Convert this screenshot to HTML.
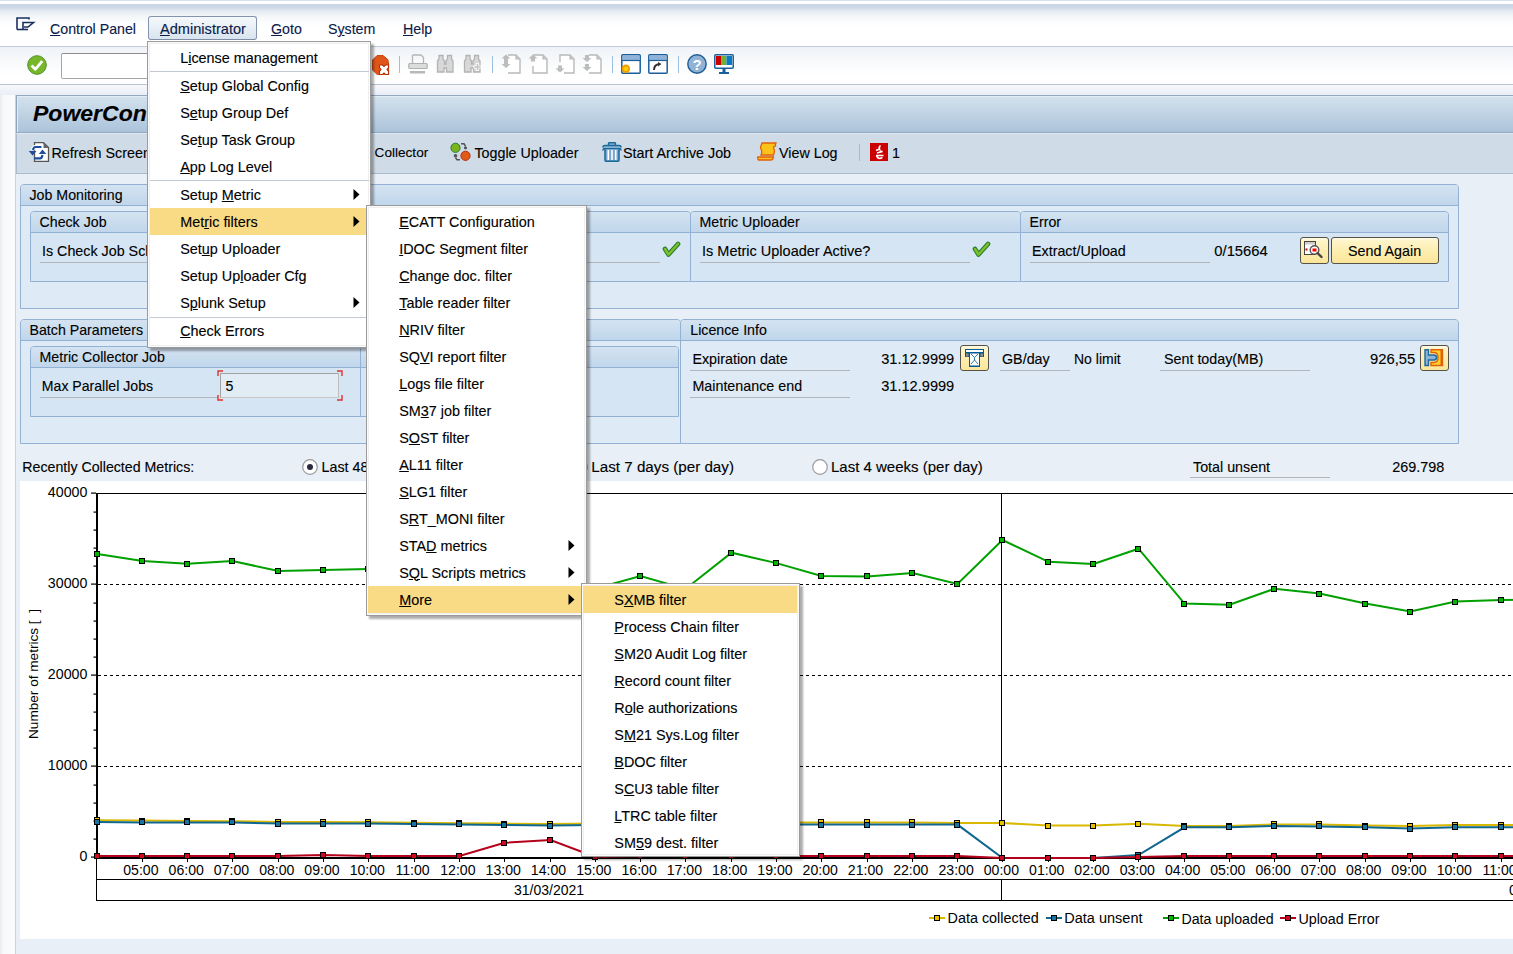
<!DOCTYPE html><html><head><meta charset="utf-8"><style>
*{margin:0;padding:0;box-sizing:border-box}
html,body{width:1513px;height:954px;overflow:hidden;background:#e8eff7;font-family:"Liberation Sans",sans-serif}
.a{position:absolute}
.t{position:absolute;white-space:nowrap;font-family:"Liberation Sans",sans-serif;-webkit-text-stroke:0.12px currentColor}
u{text-decoration:underline;text-underline-offset:1px;text-decoration-thickness:1px}
svg{position:absolute;overflow:visible}
</style></head><body><div class="a" style="left:0px;top:84px;width:16px;height:870px;background:linear-gradient(to right,#e9eaec,#f7f8f9 3px,#fbfcfd)"></div>
<div class="a" style="left:0px;top:0px;width:1513px;height:47px;background:linear-gradient(to bottom,#d6e1ee 0px,#d6e1ee 1px,#ffffff 1.5px,#ffffff 3.5px,#c8d5e5 4.5px,#cfdae7 8px,#e6ebf2 11px,#f3f6f9 16px,#fbfcfd 22px,#ffffff 28px,#ffffff 47px)"></div>
<div class="a" style="left:0px;top:46px;width:1513px;height:1px;background:#c3cdd9"></div>
<div class="a" style="left:0px;top:47px;width:1513px;height:38px;background:linear-gradient(to bottom,#eff3f8,#f7f9fb 35%,#ffffff 75%,#ffffff)"></div>
<div class="a" style="left:0px;top:84px;width:1513px;height:1px;background:#bac6d3"></div>
<div class="a" style="left:0px;top:85px;width:1513px;height:10px;background:linear-gradient(to bottom,#f6f8fb,#e9edf6)"></div>
<div class="a" style="left:15px;top:95px;width:1px;height:859px;background:#c5d2e0"></div>
<svg style="left:16px;top:17px" width="19" height="14" viewBox="0 0 19 14"><path d="M1 12.5 V1 H13 V2.5 M7 13 V5.5 H17.5 L12 10 H8" fill="none" stroke="#1b2f5e" stroke-width="1.6"/><path d="M1 12.5 H12" stroke="#1b2f5e" stroke-width="1.6"/></svg>
<div class="t " style="left:50.00px;top:22.28px;font-size:14.2px;line-height:14.2px;color:#0a1a4a;"><u>C</u>ontrol Panel</div>
<div class="a" style="left:148px;top:16px;width:109px;height:24px;border:1px solid #8594ad;border-bottom-color:#7f8ca3;border-radius:3px;background:linear-gradient(to bottom,#f6f9fc,#d8e4ef)"></div>
<div class="t " style="left:160.00px;top:21.94px;font-size:14.6px;line-height:14.6px;color:#0a1a4a;"><u>A</u>dministrator</div>
<div class="t " style="left:271.00px;top:22.28px;font-size:14.2px;line-height:14.2px;color:#0a1a4a;"><u>G</u>oto</div>
<div class="t " style="left:328.00px;top:22.28px;font-size:14.2px;line-height:14.2px;color:#0a1a4a;">S<u>y</u>stem</div>
<div class="t " style="left:403.00px;top:22.28px;font-size:14.2px;line-height:14.2px;color:#0a1a4a;"><u>H</u>elp</div>
<div class="a" style="left:16px;top:95px;width:1497px;height:38px;background:linear-gradient(to bottom,#d3e1ed,#c4d6e6 40%,#abc3da);border-top:1px solid #94a9c0;border-left:1px solid #8fa5bd;border-bottom:1px solid #93a9c0;box-shadow:inset 1px 1px 0 #e2ecf5"></div>
<div class="t " style="left:33.00px;top:101.53px;font-size:23px;line-height:23px;color:#000;transform:scaleY(0.97);transform-origin:0 19.47px;font-weight:bold;font-style:italic">PowerConnect</div>
<div class="a" style="left:16px;top:133px;width:1497px;height:41px;background:#cfdce7;border-top:1px solid #e3ebf2;border-left:1px solid #a9bbcc;border-bottom:1px solid #a9bbcc"></div>
<div class="t " style="left:51.50px;top:145.90px;font-size:14.3px;line-height:14.3px;color:#000;">Refresh Screen</div>
<div class="t " style="left:374.60px;top:146.49px;font-size:13.6px;line-height:13.6px;color:#000;">Collector</div>
<div class="t " style="left:474.40px;top:145.90px;font-size:14.3px;line-height:14.3px;color:#000;">Toggle Uploader</div>
<div class="t " style="left:623.00px;top:145.90px;font-size:14.3px;line-height:14.3px;color:#000;">Start Archive Job</div>
<div class="t " style="left:779.00px;top:145.90px;font-size:14.3px;line-height:14.3px;color:#000;">View Log</div>
<div class="a" style="left:859px;top:144px;width:1px;height:17px;background:#a9bccf"></div>
<div class="t " style="left:892.00px;top:145.90px;font-size:14.3px;line-height:14.3px;color:#000;">1</div>
<div class="a" style="left:20px;top:184px;width:1439px;height:125px;background:#deeaf5;border:1px solid #93b1d2;border-radius:4px 4px 0 0"></div>
<div class="a" style="left:21px;top:185px;width:1437px;height:21px;background:linear-gradient(to bottom,#d4e3f1,#c0d6eb);border-radius:3px 3px 0 0;border-bottom:1px solid #93b1d2"></div>
<div class="t " style="left:29.50px;top:188.48px;font-size:14.2px;line-height:14.2px;color:#000;">Job Monitoring</div>
<div class="a" style="left:30px;top:211px;width:661px;height:71px;background:#d5e5f3;border:1px solid #93b1d2;border-radius:4px 4px 0 0"></div>
<div class="a" style="left:31px;top:212px;width:659px;height:21px;background:linear-gradient(to bottom,#d4e3f1,#c0d6eb);border-radius:3px 3px 0 0;border-bottom:1px solid #93b1d2"></div>
<div class="t " style="left:39.50px;top:214.98px;font-size:14.2px;line-height:14.2px;color:#000;">Check Job</div>
<div class="a" style="left:690px;top:211px;width:331px;height:71px;background:#d5e5f3;border:1px solid #93b1d2;border-radius:4px 4px 0 0"></div>
<div class="a" style="left:691px;top:212px;width:329px;height:21px;background:linear-gradient(to bottom,#d4e3f1,#c0d6eb);border-radius:3px 3px 0 0;border-bottom:1px solid #93b1d2"></div>
<div class="t " style="left:699.50px;top:214.98px;font-size:14.2px;line-height:14.2px;color:#000;">Metric Uploader</div>
<div class="a" style="left:1020px;top:211px;width:429px;height:71px;background:#d5e5f3;border:1px solid #93b1d2;border-radius:4px 4px 0 0"></div>
<div class="a" style="left:1021px;top:212px;width:427px;height:21px;background:linear-gradient(to bottom,#d4e3f1,#c0d6eb);border-radius:3px 3px 0 0;border-bottom:1px solid #93b1d2"></div>
<div class="t " style="left:1029.50px;top:214.98px;font-size:14.2px;line-height:14.2px;color:#000;">Error</div>
<div class="t " style="left:42.00px;top:243.90px;font-size:14.3px;line-height:14.3px;color:#000;">Is Check Job Scheduled?</div>
<div class="a" style="left:40px;top:262px;width:620px;height:1px;background:#b2b6bb"></div>
<div class="t " style="left:702.00px;top:243.73px;font-size:14.5px;line-height:14.5px;color:#000;">Is Metric Uploader Active?</div>
<div class="a" style="left:700px;top:262px;width:270px;height:1px;background:#b2b6bb"></div>
<div class="t " style="left:1032.00px;top:243.90px;font-size:14.3px;line-height:14.3px;color:#000;">Extract/Upload</div>
<div class="a" style="left:1030px;top:262px;width:180px;height:1px;background:#b2b6bb"></div>
<div class="t " style="left:1214.30px;top:244.07px;font-size:14.8px;line-height:14.8px;color:#000;">0/15664</div>
<div class="a" style="left:1300px;top:237px;width:29px;height:27px;background:linear-gradient(to bottom,#fffbe8 0px,#fff4c8 3px,#fdeeb0 50%,#fbe59a);border:1px solid #55524a;border-radius:3px"></div>
<div class="a" style="left:1331px;top:237px;width:108px;height:27px;background:linear-gradient(to bottom,#fffbe8 0px,#fff4c8 3px,#fdeeb0 50%,#fbe59a);border:1px solid #55524a;border-radius:3px"></div>
<div class="t " style="left:1348.00px;top:244.10px;font-size:14.3px;line-height:14.3px;color:#000;">Send Again</div>
<div class="a" style="left:20px;top:319px;width:661px;height:125px;background:#deeaf5;border:1px solid #93b1d2;border-radius:4px 4px 0 0"></div>
<div class="a" style="left:21px;top:320px;width:659px;height:21px;background:linear-gradient(to bottom,#d4e3f1,#c0d6eb);border-radius:3px 3px 0 0;border-bottom:1px solid #93b1d2"></div>
<div class="t " style="left:29.50px;top:323.28px;font-size:14.2px;line-height:14.2px;color:#000;">Batch Parameters</div>
<div class="a" style="left:30px;top:346px;width:331px;height:71px;background:#d5e5f3;border:1px solid #93b1d2;border-radius:4px 4px 0 0"></div>
<div class="a" style="left:31px;top:347px;width:329px;height:21px;background:linear-gradient(to bottom,#d4e3f1,#c0d6eb);border-radius:3px 3px 0 0;border-bottom:1px solid #93b1d2"></div>
<div class="t " style="left:39.50px;top:350.18px;font-size:14.2px;line-height:14.2px;color:#000;">Metric Collector Job</div>
<div class="a" style="left:360px;top:346px;width:319px;height:71px;background:#d5e5f3;border:1px solid #93b1d2;border-radius:4px 4px 0 0"></div>
<div class="a" style="left:361px;top:347px;width:317px;height:21px;background:linear-gradient(to bottom,#d4e3f1,#c0d6eb);border-radius:3px 3px 0 0;border-bottom:1px solid #93b1d2"></div>
<div class="t " style="left:41.80px;top:378.76px;font-size:14.1px;line-height:14.1px;color:#000;">Max Parallel Jobs</div>
<div class="a" style="left:40px;top:397px;width:178px;height:1px;background:#b2b6bb"></div>
<div class="a" style="left:220px;top:373px;width:119px;height:25px;background:#e2ecf5;border:1px solid #a3a3a3;border-right-color:#bdbdbd;border-bottom-color:#c8c8c8"></div>
<div class="t " style="left:225.50px;top:378.68px;font-size:14.2px;line-height:14.2px;color:#000;">5</div>
<svg style="left:217px;top:370px" width="126" height="31" viewBox="0 0 126 31"><path d="M1 6V1H6 M120 1H125V6 M125 25V30H120 M6 30H1V25" fill="none" stroke="#e0322e" stroke-width="1.4"/></svg>
<div class="a" style="left:680px;top:319px;width:779px;height:125px;background:#deeaf5;border:1px solid #93b1d2;border-radius:4px 4px 0 0"></div>
<div class="a" style="left:681px;top:320px;width:777px;height:21px;background:linear-gradient(to bottom,#d4e3f1,#c0d6eb);border-radius:3px 3px 0 0;border-bottom:1px solid #93b1d2"></div>
<div class="t " style="left:690.30px;top:323.28px;font-size:14.2px;line-height:14.2px;color:#000;">Licence Info</div>
<div class="t " style="left:692.40px;top:351.50px;font-size:14.3px;line-height:14.3px;color:#000;">Expiration date</div>
<div class="a" style="left:690px;top:370px;width:160px;height:1px;background:#b2b6bb"></div>
<div class="t " style="left:692.40px;top:378.50px;font-size:14.3px;line-height:14.3px;color:#000;">Maintenance end</div>
<div class="a" style="left:690px;top:397px;width:160px;height:1px;background:#b2b6bb"></div>
<div class="t " style="left:881.20px;top:351.84px;font-size:14.6px;line-height:14.6px;color:#000;">31.12.9999</div>
<div class="t " style="left:881.20px;top:378.84px;font-size:14.6px;line-height:14.6px;color:#000;">31.12.9999</div>
<div class="a" style="left:960px;top:345px;width:29px;height:26px;background:linear-gradient(to bottom,#fffbe8 0px,#fff4c8 3px,#fdeeb0 50%,#fbe59a);border:1px solid #55524a;border-radius:3px"></div>
<div class="t " style="left:1002.00px;top:351.50px;font-size:14.3px;line-height:14.3px;color:#000;">GB/day</div>
<div class="a" style="left:1000px;top:370px;width:70px;height:1px;background:#b2b6bb"></div>
<div class="t " style="left:1074.00px;top:351.75px;font-size:14.0px;line-height:14.0px;color:#000;">No limit</div>
<div class="t " style="left:1164.00px;top:351.50px;font-size:14.3px;line-height:14.3px;color:#000;">Sent today(MB)</div>
<div class="a" style="left:1160px;top:370px;width:150px;height:1px;background:#b2b6bb"></div>
<div class="t " style="left:1370.00px;top:351.67px;font-size:14.8px;line-height:14.8px;color:#000;">926,55</div>
<div class="a" style="left:1420px;top:345px;width:29px;height:26px;background:linear-gradient(to bottom,#fffbe8 0px,#fff4c8 3px,#fdeeb0 50%,#fbe59a);border:1px solid #55524a;border-radius:3px"></div>
<div class="t " style="left:22.30px;top:459.78px;font-size:14.2px;line-height:14.2px;color:#000;">Recently Collected Metrics:</div>
<svg style="left:302px;top:459px" width="16" height="16" viewBox="0 0 16 16"><circle cx="8" cy="8" r="7.3" fill="#fff" stroke="#9a9a9a" stroke-width="1.2"/><circle cx="8" cy="8" r="3" fill="#2a2a3a"/></svg>
<div class="t " style="left:321.50px;top:459.70px;font-size:14.3px;line-height:14.3px;color:#000;">Last 48 hours (per hour)</div>
<svg style="left:572px;top:459px" width="16" height="16" viewBox="0 0 16 16"><circle cx="8" cy="8" r="7.3" fill="#fff" stroke="#9a9a9a" stroke-width="1.2"/></svg>
<div class="t " style="left:591.30px;top:458.93px;font-size:15.2px;line-height:15.2px;color:#000;">Last 7 days (per day)</div>
<svg style="left:812px;top:459px" width="16" height="16" viewBox="0 0 16 16"><circle cx="8" cy="8" r="7.3" fill="#fff" stroke="#9a9a9a" stroke-width="1.2"/></svg>
<div class="t " style="left:831.00px;top:459.10px;font-size:15.0px;line-height:15.0px;color:#000;">Last 4 weeks (per day)</div>
<div class="t " style="left:1193.00px;top:459.70px;font-size:14.3px;line-height:14.3px;color:#000;">Total unsent</div>
<div class="a" style="left:1190px;top:477px;width:140px;height:1px;background:#b2b6bb"></div>
<div class="t " style="left:1392.30px;top:459.61px;font-size:14.4px;line-height:14.4px;color:#000;">269.798</div>
<div class="a" style="left:20px;top:481px;width:1493px;height:458px;background:#fff"></div>
<svg style="left:0px;top:0px" width="1513" height="954" viewBox="0 0 1513 954"><rect x="97" y="493" width="1416" height="1" fill="#000"/><line x1="98" y1="766.4" x2="1513" y2="766.4" stroke="#000" stroke-width="1" stroke-dasharray="3 3" shape-rendering="crispEdges"/><line x1="98" y1="675.4" x2="1513" y2="675.4" stroke="#000" stroke-width="1" stroke-dasharray="3 3" shape-rendering="crispEdges"/><line x1="98" y1="584.4" x2="1513" y2="584.4" stroke="#000" stroke-width="1" stroke-dasharray="3 3" shape-rendering="crispEdges"/><rect x="1001" y="493" width="1" height="366" fill="#000"/><rect x="1001" y="879" width="1" height="22" fill="#000"/><rect x="96" y="857" width="1" height="44" fill="#000"/><rect x="96" y="879" width="1417" height="1" fill="#000"/><rect x="96" y="900" width="1417" height="1" fill="#000"/><rect x="96" y="493" width="2" height="366" fill="#000"/><rect x="91" y="856.5" width="5" height="1.2" fill="#000"/><rect x="93.5" y="838.5" width="2.5" height="1.2" fill="#000"/><rect x="93.5" y="820.5" width="2.5" height="1.2" fill="#000"/><rect x="93.5" y="802.5" width="2.5" height="1.2" fill="#000"/><rect x="93.5" y="784.5" width="2.5" height="1.2" fill="#000"/><rect x="91" y="765.5" width="5" height="1.2" fill="#000"/><rect x="93.5" y="747.5" width="2.5" height="1.2" fill="#000"/><rect x="93.5" y="729.5" width="2.5" height="1.2" fill="#000"/><rect x="93.5" y="711.5" width="2.5" height="1.2" fill="#000"/><rect x="93.5" y="693.5" width="2.5" height="1.2" fill="#000"/><rect x="91" y="674.5" width="5" height="1.2" fill="#000"/><rect x="93.5" y="656.5" width="2.5" height="1.2" fill="#000"/><rect x="93.5" y="638.5" width="2.5" height="1.2" fill="#000"/><rect x="93.5" y="620.5" width="2.5" height="1.2" fill="#000"/><rect x="93.5" y="602.5" width="2.5" height="1.2" fill="#000"/><rect x="91" y="583.5" width="5" height="1.2" fill="#000"/><rect x="93.5" y="565.5" width="2.5" height="1.2" fill="#000"/><rect x="93.5" y="547.5" width="2.5" height="1.2" fill="#000"/><rect x="93.5" y="529.5" width="2.5" height="1.2" fill="#000"/><rect x="93.5" y="511.5" width="2.5" height="1.2" fill="#000"/><rect x="91" y="492.5" width="5" height="1.2" fill="#000"/><rect x="142" y="859" width="1" height="3" fill="#000"/><rect x="187" y="859" width="1" height="3" fill="#000"/><rect x="232" y="859" width="1" height="3" fill="#000"/><rect x="278" y="859" width="1" height="3" fill="#000"/><rect x="323" y="859" width="1" height="3" fill="#000"/><rect x="368" y="859" width="1" height="3" fill="#000"/><rect x="414" y="859" width="1" height="3" fill="#000"/><rect x="459" y="859" width="1" height="3" fill="#000"/><rect x="504" y="859" width="1" height="3" fill="#000"/><rect x="550" y="859" width="1" height="3" fill="#000"/><rect x="595" y="859" width="1" height="3" fill="#000"/><rect x="640" y="859" width="1" height="3" fill="#000"/><rect x="685" y="859" width="1" height="3" fill="#000"/><rect x="731" y="859" width="1" height="3" fill="#000"/><rect x="776" y="859" width="1" height="3" fill="#000"/><rect x="821" y="859" width="1" height="3" fill="#000"/><rect x="867" y="859" width="1" height="3" fill="#000"/><rect x="912" y="859" width="1" height="3" fill="#000"/><rect x="957" y="859" width="1" height="3" fill="#000"/><rect x="1002" y="859" width="1" height="3" fill="#000"/><rect x="1048" y="859" width="1" height="3" fill="#000"/><rect x="1093" y="859" width="1" height="3" fill="#000"/><rect x="1138" y="859" width="1" height="3" fill="#000"/><rect x="1184" y="859" width="1" height="3" fill="#000"/><rect x="1229" y="859" width="1" height="3" fill="#000"/><rect x="1274" y="859" width="1" height="3" fill="#000"/><rect x="1319" y="859" width="1" height="3" fill="#000"/><rect x="1365" y="859" width="1" height="3" fill="#000"/><rect x="1410" y="859" width="1" height="3" fill="#000"/><rect x="1455" y="859" width="1" height="3" fill="#000"/><rect x="1501" y="859" width="1" height="3" fill="#000"/><rect x="1546" y="859" width="1" height="3" fill="#000"/><rect x="96" y="857" width="1417" height="2" fill="#000"/><polyline points="97.5,820.3 142.5,820.6 187.5,821.0 232.5,821.2 278.5,822.0 323.5,822.0 368.5,822.3 414.5,822.8 459.5,823.2 504.5,823.6 550.5,824.0 595.5,823.5 640.5,823.0 685.5,823.0 731.5,822.8 776.5,822.5 821.5,822.5 867.5,822.5 912.5,822.5 957.5,823.0 1002.5,823.0 1048.5,825.6 1093.5,825.6 1138.5,823.8 1184.5,826.0 1229.5,826.0 1274.5,824.5 1319.5,824.5 1365.5,825.5 1410.5,826.0 1455.5,825.0 1501.5,825.0 1546.5,825.0" fill="none" stroke="#d9b800" stroke-width="2" stroke-linejoin="miter"/><rect x="94.5" y="817.5" width="5" height="5" fill="#e8c000" stroke="#000" stroke-width="1" shape-rendering="crispEdges"/><rect x="139.5" y="818.5" width="5" height="5" fill="#e8c000" stroke="#000" stroke-width="1" shape-rendering="crispEdges"/><rect x="184.5" y="818.5" width="5" height="5" fill="#e8c000" stroke="#000" stroke-width="1" shape-rendering="crispEdges"/><rect x="229.5" y="818.5" width="5" height="5" fill="#e8c000" stroke="#000" stroke-width="1" shape-rendering="crispEdges"/><rect x="275.5" y="819.5" width="5" height="5" fill="#e8c000" stroke="#000" stroke-width="1" shape-rendering="crispEdges"/><rect x="320.5" y="819.5" width="5" height="5" fill="#e8c000" stroke="#000" stroke-width="1" shape-rendering="crispEdges"/><rect x="365.5" y="819.5" width="5" height="5" fill="#e8c000" stroke="#000" stroke-width="1" shape-rendering="crispEdges"/><rect x="411.5" y="820.5" width="5" height="5" fill="#e8c000" stroke="#000" stroke-width="1" shape-rendering="crispEdges"/><rect x="456.5" y="820.5" width="5" height="5" fill="#e8c000" stroke="#000" stroke-width="1" shape-rendering="crispEdges"/><rect x="501.5" y="821.5" width="5" height="5" fill="#e8c000" stroke="#000" stroke-width="1" shape-rendering="crispEdges"/><rect x="547.5" y="821.5" width="5" height="5" fill="#e8c000" stroke="#000" stroke-width="1" shape-rendering="crispEdges"/><rect x="592.5" y="821.5" width="5" height="5" fill="#e8c000" stroke="#000" stroke-width="1" shape-rendering="crispEdges"/><rect x="637.5" y="820.5" width="5" height="5" fill="#e8c000" stroke="#000" stroke-width="1" shape-rendering="crispEdges"/><rect x="682.5" y="820.5" width="5" height="5" fill="#e8c000" stroke="#000" stroke-width="1" shape-rendering="crispEdges"/><rect x="728.5" y="820.5" width="5" height="5" fill="#e8c000" stroke="#000" stroke-width="1" shape-rendering="crispEdges"/><rect x="773.5" y="819.5" width="5" height="5" fill="#e8c000" stroke="#000" stroke-width="1" shape-rendering="crispEdges"/><rect x="818.5" y="819.5" width="5" height="5" fill="#e8c000" stroke="#000" stroke-width="1" shape-rendering="crispEdges"/><rect x="864.5" y="819.5" width="5" height="5" fill="#e8c000" stroke="#000" stroke-width="1" shape-rendering="crispEdges"/><rect x="909.5" y="819.5" width="5" height="5" fill="#e8c000" stroke="#000" stroke-width="1" shape-rendering="crispEdges"/><rect x="954.5" y="820.5" width="5" height="5" fill="#e8c000" stroke="#000" stroke-width="1" shape-rendering="crispEdges"/><rect x="999.5" y="820.5" width="5" height="5" fill="#e8c000" stroke="#000" stroke-width="1" shape-rendering="crispEdges"/><rect x="1045.5" y="823.5" width="5" height="5" fill="#e8c000" stroke="#000" stroke-width="1" shape-rendering="crispEdges"/><rect x="1090.5" y="823.5" width="5" height="5" fill="#e8c000" stroke="#000" stroke-width="1" shape-rendering="crispEdges"/><rect x="1135.5" y="821.5" width="5" height="5" fill="#e8c000" stroke="#000" stroke-width="1" shape-rendering="crispEdges"/><rect x="1181.5" y="823.5" width="5" height="5" fill="#e8c000" stroke="#000" stroke-width="1" shape-rendering="crispEdges"/><rect x="1226.5" y="823.5" width="5" height="5" fill="#e8c000" stroke="#000" stroke-width="1" shape-rendering="crispEdges"/><rect x="1271.5" y="821.5" width="5" height="5" fill="#e8c000" stroke="#000" stroke-width="1" shape-rendering="crispEdges"/><rect x="1316.5" y="821.5" width="5" height="5" fill="#e8c000" stroke="#000" stroke-width="1" shape-rendering="crispEdges"/><rect x="1362.5" y="823.5" width="5" height="5" fill="#e8c000" stroke="#000" stroke-width="1" shape-rendering="crispEdges"/><rect x="1407.5" y="823.5" width="5" height="5" fill="#e8c000" stroke="#000" stroke-width="1" shape-rendering="crispEdges"/><rect x="1452.5" y="822.5" width="5" height="5" fill="#e8c000" stroke="#000" stroke-width="1" shape-rendering="crispEdges"/><rect x="1498.5" y="822.5" width="5" height="5" fill="#e8c000" stroke="#000" stroke-width="1" shape-rendering="crispEdges"/><rect x="1543.5" y="822.5" width="5" height="5" fill="#e8c000" stroke="#000" stroke-width="1" shape-rendering="crispEdges"/><polyline points="97.5,822.0 142.5,822.5 187.5,822.5 232.5,822.5 278.5,823.5 323.5,823.5 368.5,823.5 414.5,824.0 459.5,824.5 504.5,825.0 550.5,825.5 595.5,825.0 640.5,825.0 685.5,825.0 731.5,824.6 776.5,824.6 821.5,824.6 867.5,824.6 912.5,824.6 957.5,824.6 1002.5,858.0 1048.5,858.0 1093.5,858.0 1138.5,855.0 1184.5,827.3 1229.5,827.3 1274.5,826.0 1319.5,826.5 1365.5,827.3 1410.5,828.6 1455.5,827.3 1501.5,827.3 1546.5,827.3" fill="none" stroke="#0f6790" stroke-width="2" stroke-linejoin="miter"/><rect x="94.5" y="819.5" width="5" height="5" fill="#1a74a0" stroke="#000" stroke-width="1" shape-rendering="crispEdges"/><rect x="139.5" y="819.5" width="5" height="5" fill="#1a74a0" stroke="#000" stroke-width="1" shape-rendering="crispEdges"/><rect x="184.5" y="819.5" width="5" height="5" fill="#1a74a0" stroke="#000" stroke-width="1" shape-rendering="crispEdges"/><rect x="229.5" y="819.5" width="5" height="5" fill="#1a74a0" stroke="#000" stroke-width="1" shape-rendering="crispEdges"/><rect x="275.5" y="821.5" width="5" height="5" fill="#1a74a0" stroke="#000" stroke-width="1" shape-rendering="crispEdges"/><rect x="320.5" y="821.5" width="5" height="5" fill="#1a74a0" stroke="#000" stroke-width="1" shape-rendering="crispEdges"/><rect x="365.5" y="821.5" width="5" height="5" fill="#1a74a0" stroke="#000" stroke-width="1" shape-rendering="crispEdges"/><rect x="411.5" y="821.5" width="5" height="5" fill="#1a74a0" stroke="#000" stroke-width="1" shape-rendering="crispEdges"/><rect x="456.5" y="821.5" width="5" height="5" fill="#1a74a0" stroke="#000" stroke-width="1" shape-rendering="crispEdges"/><rect x="501.5" y="822.5" width="5" height="5" fill="#1a74a0" stroke="#000" stroke-width="1" shape-rendering="crispEdges"/><rect x="547.5" y="823.5" width="5" height="5" fill="#1a74a0" stroke="#000" stroke-width="1" shape-rendering="crispEdges"/><rect x="592.5" y="822.5" width="5" height="5" fill="#1a74a0" stroke="#000" stroke-width="1" shape-rendering="crispEdges"/><rect x="637.5" y="822.5" width="5" height="5" fill="#1a74a0" stroke="#000" stroke-width="1" shape-rendering="crispEdges"/><rect x="682.5" y="822.5" width="5" height="5" fill="#1a74a0" stroke="#000" stroke-width="1" shape-rendering="crispEdges"/><rect x="728.5" y="822.5" width="5" height="5" fill="#1a74a0" stroke="#000" stroke-width="1" shape-rendering="crispEdges"/><rect x="773.5" y="822.5" width="5" height="5" fill="#1a74a0" stroke="#000" stroke-width="1" shape-rendering="crispEdges"/><rect x="818.5" y="822.5" width="5" height="5" fill="#1a74a0" stroke="#000" stroke-width="1" shape-rendering="crispEdges"/><rect x="864.5" y="822.5" width="5" height="5" fill="#1a74a0" stroke="#000" stroke-width="1" shape-rendering="crispEdges"/><rect x="909.5" y="822.5" width="5" height="5" fill="#1a74a0" stroke="#000" stroke-width="1" shape-rendering="crispEdges"/><rect x="954.5" y="822.5" width="5" height="5" fill="#1a74a0" stroke="#000" stroke-width="1" shape-rendering="crispEdges"/><rect x="999.5" y="855.5" width="5" height="5" fill="#1a74a0" stroke="#000" stroke-width="1" shape-rendering="crispEdges"/><rect x="1045.5" y="855.5" width="5" height="5" fill="#1a74a0" stroke="#000" stroke-width="1" shape-rendering="crispEdges"/><rect x="1090.5" y="855.5" width="5" height="5" fill="#1a74a0" stroke="#000" stroke-width="1" shape-rendering="crispEdges"/><rect x="1135.5" y="852.5" width="5" height="5" fill="#1a74a0" stroke="#000" stroke-width="1" shape-rendering="crispEdges"/><rect x="1181.5" y="824.5" width="5" height="5" fill="#1a74a0" stroke="#000" stroke-width="1" shape-rendering="crispEdges"/><rect x="1226.5" y="824.5" width="5" height="5" fill="#1a74a0" stroke="#000" stroke-width="1" shape-rendering="crispEdges"/><rect x="1271.5" y="823.5" width="5" height="5" fill="#1a74a0" stroke="#000" stroke-width="1" shape-rendering="crispEdges"/><rect x="1316.5" y="823.5" width="5" height="5" fill="#1a74a0" stroke="#000" stroke-width="1" shape-rendering="crispEdges"/><rect x="1362.5" y="824.5" width="5" height="5" fill="#1a74a0" stroke="#000" stroke-width="1" shape-rendering="crispEdges"/><rect x="1407.5" y="826.5" width="5" height="5" fill="#1a74a0" stroke="#000" stroke-width="1" shape-rendering="crispEdges"/><rect x="1452.5" y="824.5" width="5" height="5" fill="#1a74a0" stroke="#000" stroke-width="1" shape-rendering="crispEdges"/><rect x="1498.5" y="824.5" width="5" height="5" fill="#1a74a0" stroke="#000" stroke-width="1" shape-rendering="crispEdges"/><rect x="1543.5" y="824.5" width="5" height="5" fill="#1a74a0" stroke="#000" stroke-width="1" shape-rendering="crispEdges"/><polyline points="97.5,554.1 142.5,561.0 187.5,563.8 232.5,561.0 278.5,571.0 323.5,570.0 368.5,569.0 414.5,569.0 459.5,571.0 504.5,573.0 550.5,576.0 595.5,588.4 640.5,576.0 685.5,589.0 731.5,552.7 776.5,563.1 821.5,575.9 867.5,576.5 912.5,573.0 957.5,584.0 1002.5,540.0 1048.5,561.8 1093.5,563.9 1138.5,548.7 1184.5,603.6 1229.5,604.7 1274.5,588.8 1319.5,593.6 1365.5,603.6 1410.5,611.6 1455.5,601.6 1501.5,600.0 1546.5,599.5" fill="none" stroke="#00a000" stroke-width="2" stroke-linejoin="miter"/><rect x="94.5" y="551.5" width="5" height="5" fill="#00b400" stroke="#000" stroke-width="1" shape-rendering="crispEdges"/><rect x="139.5" y="558.5" width="5" height="5" fill="#00b400" stroke="#000" stroke-width="1" shape-rendering="crispEdges"/><rect x="184.5" y="561.5" width="5" height="5" fill="#00b400" stroke="#000" stroke-width="1" shape-rendering="crispEdges"/><rect x="229.5" y="558.5" width="5" height="5" fill="#00b400" stroke="#000" stroke-width="1" shape-rendering="crispEdges"/><rect x="275.5" y="568.5" width="5" height="5" fill="#00b400" stroke="#000" stroke-width="1" shape-rendering="crispEdges"/><rect x="320.5" y="567.5" width="5" height="5" fill="#00b400" stroke="#000" stroke-width="1" shape-rendering="crispEdges"/><rect x="365.5" y="566.5" width="5" height="5" fill="#00b400" stroke="#000" stroke-width="1" shape-rendering="crispEdges"/><rect x="411.5" y="566.5" width="5" height="5" fill="#00b400" stroke="#000" stroke-width="1" shape-rendering="crispEdges"/><rect x="456.5" y="568.5" width="5" height="5" fill="#00b400" stroke="#000" stroke-width="1" shape-rendering="crispEdges"/><rect x="501.5" y="570.5" width="5" height="5" fill="#00b400" stroke="#000" stroke-width="1" shape-rendering="crispEdges"/><rect x="547.5" y="573.5" width="5" height="5" fill="#00b400" stroke="#000" stroke-width="1" shape-rendering="crispEdges"/><rect x="592.5" y="585.5" width="5" height="5" fill="#00b400" stroke="#000" stroke-width="1" shape-rendering="crispEdges"/><rect x="637.5" y="573.5" width="5" height="5" fill="#00b400" stroke="#000" stroke-width="1" shape-rendering="crispEdges"/><rect x="682.5" y="586.5" width="5" height="5" fill="#00b400" stroke="#000" stroke-width="1" shape-rendering="crispEdges"/><rect x="728.5" y="550.5" width="5" height="5" fill="#00b400" stroke="#000" stroke-width="1" shape-rendering="crispEdges"/><rect x="773.5" y="560.5" width="5" height="5" fill="#00b400" stroke="#000" stroke-width="1" shape-rendering="crispEdges"/><rect x="818.5" y="573.5" width="5" height="5" fill="#00b400" stroke="#000" stroke-width="1" shape-rendering="crispEdges"/><rect x="864.5" y="573.5" width="5" height="5" fill="#00b400" stroke="#000" stroke-width="1" shape-rendering="crispEdges"/><rect x="909.5" y="570.5" width="5" height="5" fill="#00b400" stroke="#000" stroke-width="1" shape-rendering="crispEdges"/><rect x="954.5" y="581.5" width="5" height="5" fill="#00b400" stroke="#000" stroke-width="1" shape-rendering="crispEdges"/><rect x="999.5" y="537.5" width="5" height="5" fill="#00b400" stroke="#000" stroke-width="1" shape-rendering="crispEdges"/><rect x="1045.5" y="559.5" width="5" height="5" fill="#00b400" stroke="#000" stroke-width="1" shape-rendering="crispEdges"/><rect x="1090.5" y="561.5" width="5" height="5" fill="#00b400" stroke="#000" stroke-width="1" shape-rendering="crispEdges"/><rect x="1135.5" y="546.5" width="5" height="5" fill="#00b400" stroke="#000" stroke-width="1" shape-rendering="crispEdges"/><rect x="1181.5" y="601.5" width="5" height="5" fill="#00b400" stroke="#000" stroke-width="1" shape-rendering="crispEdges"/><rect x="1226.5" y="602.5" width="5" height="5" fill="#00b400" stroke="#000" stroke-width="1" shape-rendering="crispEdges"/><rect x="1271.5" y="586.5" width="5" height="5" fill="#00b400" stroke="#000" stroke-width="1" shape-rendering="crispEdges"/><rect x="1316.5" y="591.5" width="5" height="5" fill="#00b400" stroke="#000" stroke-width="1" shape-rendering="crispEdges"/><rect x="1362.5" y="601.5" width="5" height="5" fill="#00b400" stroke="#000" stroke-width="1" shape-rendering="crispEdges"/><rect x="1407.5" y="609.5" width="5" height="5" fill="#00b400" stroke="#000" stroke-width="1" shape-rendering="crispEdges"/><rect x="1452.5" y="599.5" width="5" height="5" fill="#00b400" stroke="#000" stroke-width="1" shape-rendering="crispEdges"/><rect x="1498.5" y="597.5" width="5" height="5" fill="#00b400" stroke="#000" stroke-width="1" shape-rendering="crispEdges"/><rect x="1543.5" y="597.5" width="5" height="5" fill="#00b400" stroke="#000" stroke-width="1" shape-rendering="crispEdges"/><polyline points="97.5,856.0 142.5,856.0 187.5,856.0 232.5,856.0 278.5,856.0 323.5,855.0 368.5,856.0 414.5,856.0 459.5,856.0 504.5,842.8 550.5,840.0 595.5,857.0 640.5,856.0 685.5,856.0 731.5,856.0 776.5,856.0 821.5,856.0 867.5,856.0 912.5,856.0 957.5,856.0 1002.5,858.0 1048.5,858.0 1093.5,858.0 1138.5,857.0 1184.5,856.0 1229.5,856.0 1274.5,856.0 1319.5,856.0 1365.5,856.0 1410.5,856.0 1455.5,856.0 1501.5,856.0 1546.5,856.0" fill="none" stroke="#b4001a" stroke-width="2" stroke-linejoin="miter"/><rect x="94.5" y="853.5" width="5" height="5" fill="#cc0a20" stroke="#000" stroke-width="1" shape-rendering="crispEdges"/><rect x="139.5" y="853.5" width="5" height="5" fill="#cc0a20" stroke="#000" stroke-width="1" shape-rendering="crispEdges"/><rect x="184.5" y="853.5" width="5" height="5" fill="#cc0a20" stroke="#000" stroke-width="1" shape-rendering="crispEdges"/><rect x="229.5" y="853.5" width="5" height="5" fill="#cc0a20" stroke="#000" stroke-width="1" shape-rendering="crispEdges"/><rect x="275.5" y="853.5" width="5" height="5" fill="#cc0a20" stroke="#000" stroke-width="1" shape-rendering="crispEdges"/><rect x="320.5" y="852.5" width="5" height="5" fill="#cc0a20" stroke="#000" stroke-width="1" shape-rendering="crispEdges"/><rect x="365.5" y="853.5" width="5" height="5" fill="#cc0a20" stroke="#000" stroke-width="1" shape-rendering="crispEdges"/><rect x="411.5" y="853.5" width="5" height="5" fill="#cc0a20" stroke="#000" stroke-width="1" shape-rendering="crispEdges"/><rect x="456.5" y="853.5" width="5" height="5" fill="#cc0a20" stroke="#000" stroke-width="1" shape-rendering="crispEdges"/><rect x="501.5" y="840.5" width="5" height="5" fill="#cc0a20" stroke="#000" stroke-width="1" shape-rendering="crispEdges"/><rect x="547.5" y="837.5" width="5" height="5" fill="#cc0a20" stroke="#000" stroke-width="1" shape-rendering="crispEdges"/><rect x="592.5" y="854.5" width="5" height="5" fill="#cc0a20" stroke="#000" stroke-width="1" shape-rendering="crispEdges"/><rect x="637.5" y="853.5" width="5" height="5" fill="#cc0a20" stroke="#000" stroke-width="1" shape-rendering="crispEdges"/><rect x="682.5" y="853.5" width="5" height="5" fill="#cc0a20" stroke="#000" stroke-width="1" shape-rendering="crispEdges"/><rect x="728.5" y="853.5" width="5" height="5" fill="#cc0a20" stroke="#000" stroke-width="1" shape-rendering="crispEdges"/><rect x="773.5" y="853.5" width="5" height="5" fill="#cc0a20" stroke="#000" stroke-width="1" shape-rendering="crispEdges"/><rect x="818.5" y="853.5" width="5" height="5" fill="#cc0a20" stroke="#000" stroke-width="1" shape-rendering="crispEdges"/><rect x="864.5" y="853.5" width="5" height="5" fill="#cc0a20" stroke="#000" stroke-width="1" shape-rendering="crispEdges"/><rect x="909.5" y="853.5" width="5" height="5" fill="#cc0a20" stroke="#000" stroke-width="1" shape-rendering="crispEdges"/><rect x="954.5" y="853.5" width="5" height="5" fill="#cc0a20" stroke="#000" stroke-width="1" shape-rendering="crispEdges"/><rect x="999.5" y="855.5" width="5" height="5" fill="#cc0a20" stroke="#000" stroke-width="1" shape-rendering="crispEdges"/><rect x="1045.5" y="855.5" width="5" height="5" fill="#cc0a20" stroke="#000" stroke-width="1" shape-rendering="crispEdges"/><rect x="1090.5" y="855.5" width="5" height="5" fill="#cc0a20" stroke="#000" stroke-width="1" shape-rendering="crispEdges"/><rect x="1135.5" y="854.5" width="5" height="5" fill="#cc0a20" stroke="#000" stroke-width="1" shape-rendering="crispEdges"/><rect x="1181.5" y="853.5" width="5" height="5" fill="#cc0a20" stroke="#000" stroke-width="1" shape-rendering="crispEdges"/><rect x="1226.5" y="853.5" width="5" height="5" fill="#cc0a20" stroke="#000" stroke-width="1" shape-rendering="crispEdges"/><rect x="1271.5" y="853.5" width="5" height="5" fill="#cc0a20" stroke="#000" stroke-width="1" shape-rendering="crispEdges"/><rect x="1316.5" y="853.5" width="5" height="5" fill="#cc0a20" stroke="#000" stroke-width="1" shape-rendering="crispEdges"/><rect x="1362.5" y="853.5" width="5" height="5" fill="#cc0a20" stroke="#000" stroke-width="1" shape-rendering="crispEdges"/><rect x="1407.5" y="853.5" width="5" height="5" fill="#cc0a20" stroke="#000" stroke-width="1" shape-rendering="crispEdges"/><rect x="1452.5" y="853.5" width="5" height="5" fill="#cc0a20" stroke="#000" stroke-width="1" shape-rendering="crispEdges"/><rect x="1498.5" y="853.5" width="5" height="5" fill="#cc0a20" stroke="#000" stroke-width="1" shape-rendering="crispEdges"/><rect x="1543.5" y="853.5" width="5" height="5" fill="#cc0a20" stroke="#000" stroke-width="1" shape-rendering="crispEdges"/><rect x="929" y="917" width="16" height="2" fill="#d9b800"/><rect x="934.5" y="915.5" width="5" height="5" fill="#e8c000" stroke="#000" stroke-width="1"/><rect x="1046" y="917" width="16" height="2" fill="#0f6790"/><rect x="1051.5" y="915.5" width="5" height="5" fill="#1a74a0" stroke="#000" stroke-width="1"/><rect x="1163" y="917" width="16" height="2" fill="#00a000"/><rect x="1168.5" y="915.5" width="5" height="5" fill="#00b400" stroke="#000" stroke-width="1"/><rect x="1280" y="917" width="16" height="2" fill="#b4001a"/><rect x="1285.5" y="915.5" width="5" height="5" fill="#cc0a20" stroke="#000" stroke-width="1"/></svg>
<div class="t" style="right:1425.7px;top:485.2px;font-size:14.2px;line-height:14px;color:#000;-webkit-text-stroke:0;text-align:right">40000</div>
<div class="t" style="right:1425.7px;top:576.2px;font-size:14.2px;line-height:14px;color:#000;-webkit-text-stroke:0;text-align:right">30000</div>
<div class="t" style="right:1425.7px;top:667.2px;font-size:14.2px;line-height:14px;color:#000;-webkit-text-stroke:0;text-align:right">20000</div>
<div class="t" style="right:1425.7px;top:758.2px;font-size:14.2px;line-height:14px;color:#000;-webkit-text-stroke:0;text-align:right">10000</div>
<div class="t" style="right:1425.7px;top:849.2px;font-size:14.2px;line-height:14px;color:#000;-webkit-text-stroke:0;text-align:right">0</div>
<div class="t" style="left:110.9px;width:60px;text-align:center;top:862.7px;font-size:14.1px;line-height:14px;color:#000;-webkit-text-stroke:0">05:00</div>
<div class="t" style="left:156.2px;width:60px;text-align:center;top:862.7px;font-size:14.1px;line-height:14px;color:#000;-webkit-text-stroke:0">06:00</div>
<div class="t" style="left:201.5px;width:60px;text-align:center;top:862.7px;font-size:14.1px;line-height:14px;color:#000;-webkit-text-stroke:0">07:00</div>
<div class="t" style="left:246.8px;width:60px;text-align:center;top:862.7px;font-size:14.1px;line-height:14px;color:#000;-webkit-text-stroke:0">08:00</div>
<div class="t" style="left:292.0px;width:60px;text-align:center;top:862.7px;font-size:14.1px;line-height:14px;color:#000;-webkit-text-stroke:0">09:00</div>
<div class="t" style="left:337.3px;width:60px;text-align:center;top:862.7px;font-size:14.1px;line-height:14px;color:#000;-webkit-text-stroke:0">10:00</div>
<div class="t" style="left:382.6px;width:60px;text-align:center;top:862.7px;font-size:14.1px;line-height:14px;color:#000;-webkit-text-stroke:0">11:00</div>
<div class="t" style="left:427.9px;width:60px;text-align:center;top:862.7px;font-size:14.1px;line-height:14px;color:#000;-webkit-text-stroke:0">12:00</div>
<div class="t" style="left:473.2px;width:60px;text-align:center;top:862.7px;font-size:14.1px;line-height:14px;color:#000;-webkit-text-stroke:0">13:00</div>
<div class="t" style="left:518.5px;width:60px;text-align:center;top:862.7px;font-size:14.1px;line-height:14px;color:#000;-webkit-text-stroke:0">14:00</div>
<div class="t" style="left:563.8px;width:60px;text-align:center;top:862.7px;font-size:14.1px;line-height:14px;color:#000;-webkit-text-stroke:0">15:00</div>
<div class="t" style="left:609.1px;width:60px;text-align:center;top:862.7px;font-size:14.1px;line-height:14px;color:#000;-webkit-text-stroke:0">16:00</div>
<div class="t" style="left:654.4px;width:60px;text-align:center;top:862.7px;font-size:14.1px;line-height:14px;color:#000;-webkit-text-stroke:0">17:00</div>
<div class="t" style="left:699.7px;width:60px;text-align:center;top:862.7px;font-size:14.1px;line-height:14px;color:#000;-webkit-text-stroke:0">18:00</div>
<div class="t" style="left:745.0px;width:60px;text-align:center;top:862.7px;font-size:14.1px;line-height:14px;color:#000;-webkit-text-stroke:0">19:00</div>
<div class="t" style="left:790.2px;width:60px;text-align:center;top:862.7px;font-size:14.1px;line-height:14px;color:#000;-webkit-text-stroke:0">20:00</div>
<div class="t" style="left:835.5px;width:60px;text-align:center;top:862.7px;font-size:14.1px;line-height:14px;color:#000;-webkit-text-stroke:0">21:00</div>
<div class="t" style="left:880.8px;width:60px;text-align:center;top:862.7px;font-size:14.1px;line-height:14px;color:#000;-webkit-text-stroke:0">22:00</div>
<div class="t" style="left:926.1px;width:60px;text-align:center;top:862.7px;font-size:14.1px;line-height:14px;color:#000;-webkit-text-stroke:0">23:00</div>
<div class="t" style="left:971.4px;width:60px;text-align:center;top:862.7px;font-size:14.1px;line-height:14px;color:#000;-webkit-text-stroke:0">00:00</div>
<div class="t" style="left:1016.7px;width:60px;text-align:center;top:862.7px;font-size:14.1px;line-height:14px;color:#000;-webkit-text-stroke:0">01:00</div>
<div class="t" style="left:1062.0px;width:60px;text-align:center;top:862.7px;font-size:14.1px;line-height:14px;color:#000;-webkit-text-stroke:0">02:00</div>
<div class="t" style="left:1107.3px;width:60px;text-align:center;top:862.7px;font-size:14.1px;line-height:14px;color:#000;-webkit-text-stroke:0">03:00</div>
<div class="t" style="left:1152.6px;width:60px;text-align:center;top:862.7px;font-size:14.1px;line-height:14px;color:#000;-webkit-text-stroke:0">04:00</div>
<div class="t" style="left:1197.8px;width:60px;text-align:center;top:862.7px;font-size:14.1px;line-height:14px;color:#000;-webkit-text-stroke:0">05:00</div>
<div class="t" style="left:1243.1px;width:60px;text-align:center;top:862.7px;font-size:14.1px;line-height:14px;color:#000;-webkit-text-stroke:0">06:00</div>
<div class="t" style="left:1288.4px;width:60px;text-align:center;top:862.7px;font-size:14.1px;line-height:14px;color:#000;-webkit-text-stroke:0">07:00</div>
<div class="t" style="left:1333.7px;width:60px;text-align:center;top:862.7px;font-size:14.1px;line-height:14px;color:#000;-webkit-text-stroke:0">08:00</div>
<div class="t" style="left:1379.0px;width:60px;text-align:center;top:862.7px;font-size:14.1px;line-height:14px;color:#000;-webkit-text-stroke:0">09:00</div>
<div class="t" style="left:1424.3px;width:60px;text-align:center;top:862.7px;font-size:14.1px;line-height:14px;color:#000;-webkit-text-stroke:0">10:00</div>
<div class="t" style="left:1469.6px;width:60px;text-align:center;top:862.7px;font-size:14.1px;line-height:14px;color:#000;-webkit-text-stroke:0">11:00</div>
<div class="t" style="left:1514.9px;width:60px;text-align:center;top:862.7px;font-size:14.1px;line-height:14px;color:#000;-webkit-text-stroke:0">12:00</div>
<div class="t" style="left:499px;width:100px;text-align:center;top:883.2px;font-size:14px;line-height:14px;color:#000;-webkit-text-stroke:0">31/03/2021</div>
<div class="t" style="left:1509px;top:883.2px;font-size:14px;line-height:14px;color:#000;-webkit-text-stroke:0">01/04/2021</div>
<div class="t" style="left:34.2px;top:674.2px;font-size:13.6px;line-height:14px;color:#000;-webkit-text-stroke:0;transform:translate(-50%,-50%) rotate(-90deg)">Number of metrics [&nbsp;&nbsp;]</div>
<div class="t " style="left:947.50px;top:911.41px;font-size:14.4px;line-height:14.4px;color:#000;transform:scaleY(1.02);transform-origin:0 12.19px;-webkit-text-stroke:0">Data collected</div>
<div class="t " style="left:1064.30px;top:911.33px;font-size:14.5px;line-height:14.5px;color:#000;transform:scaleY(1.02);transform-origin:0 12.27px;-webkit-text-stroke:0">Data unsent</div>
<div class="t " style="left:1181.40px;top:911.58px;font-size:14.2px;line-height:14.2px;color:#000;transform:scaleY(1.02);transform-origin:0 12.02px;-webkit-text-stroke:0">Data uploaded</div>
<div class="t " style="left:1298.40px;top:911.50px;font-size:14.3px;line-height:14.3px;color:#000;transform:scaleY(1.02);transform-origin:0 12.10px;-webkit-text-stroke:0">Upload Error</div>
<svg style="left:27px;top:55px" width="20" height="20" viewBox="0 0 20 20"><circle cx="10" cy="10" r="9.3" fill="#76b82a" stroke="#4e8f22" stroke-width="1"/><path d="M4.5 10.5 L8.3 14.3 L15.2 6.2" fill="none" stroke="#fff" stroke-width="2.8" stroke-linejoin="round"/></svg>
<div class="a" style="left:61px;top:53px;width:100px;height:26px;background:#fff;border:1px solid #a5a5a5;border-top-color:#8c8c8c;border-radius:2px"></div>
<svg style="left:372px;top:55px" width="18" height="20" viewBox="0 0 18 20"><path d="M5 0.6 H11 L15.8 4.5 L16.6 9 V19.3 H5 L0.6 15 V5 Z" fill="#e0561a" stroke="#c4400c" stroke-width="1"/><path d="M7.5 10 H10.5 L12 11.5 L13.5 10 H16.5 V12.5 L15 14.5 L16.5 16.5 V19.5 H13.5 L12 18 L10.5 19.5 H7.5 V16.5 L9 14.5 L7.5 12.5 Z" fill="#fff" stroke="#b8300a" stroke-width="1.1"/></svg>
<div class="a" style="left:399px;top:56px;width:1px;height:17px;background:#9fbfdf"></div>
<div class="a" style="left:492px;top:56px;width:1px;height:17px;background:#9fbfdf"></div>
<div class="a" style="left:612px;top:56px;width:1px;height:17px;background:#9fbfdf"></div>
<div class="a" style="left:678px;top:56px;width:1px;height:17px;background:#9fbfdf"></div>
<svg style="left:408px;top:54px" width="20" height="20" viewBox="0 0 20 20"><path d="M4.5 1 H13 L15.5 3.5 V9" fill="none" stroke="#b5b5b5" stroke-width="1.3"/><path d="M4.5 1 V9" stroke="#b5b5b5" stroke-width="1.3"/><rect x="0.8" y="9.5" width="18.4" height="5" rx="1" fill="#dcdcdc" stroke="#b0b0b0" stroke-width="1.2"/><rect x="2" y="17" width="15" height="2.5" fill="#b8b8b8"/></svg>
<svg style="left:436px;top:54px" width="18" height="20" viewBox="0 0 18 20"><path d="M1.5 18 V7 L3 5 V1.5 H7 V5 L8.5 7 V10 H10 V7 L11.5 5 V1.5 H15.5 V5 L17 7 V18 H10.5 V14 H8 V18 Z" fill="#d8d8d8" stroke="#b3b3b3" stroke-width="1.3"/></svg>
<svg style="left:463px;top:54px" width="19" height="20" viewBox="0 0 19 20"><path d="M1.5 18 V7 L3 5 V1.5 H7 V5 L8.5 7 V10 H10 V7 L11.5 5 V1.5 H15.5 V5 L17 7 V18 H10.5 V14 H8 V18 Z" fill="#d8d8d8" stroke="#b3b3b3" stroke-width="1.3"/><path d="M14.5 9 V17 M10.5 13 H18.5" stroke="#fff" stroke-width="3.2"/><path d="M14.5 9.8 V16.2 M11.3 13 H17.7" stroke="#c4c4c4" stroke-width="1.6"/></svg>
<svg style="left:501px;top:54px" width="20" height="20" viewBox="0 0 20 20"><path d="M7 1 H15 L19 5 V19 H7" fill="#fff" stroke="#b9b9b9" stroke-width="1.4"/><path d="M15 1 V5 H19" fill="#c9c9c9" stroke="#b9b9b9" stroke-width="1.2"/><path d="M5 0.5 L9.5 4.5 H7 V7.5 H3 V4.5 H0.5 Z" fill="#bdbdbd"/><path d="M5 14 L9.5 10 H7 V7 H3 V10 H0.5 Z" fill="#bdbdbd"/></svg>
<svg style="left:528px;top:54px" width="20" height="20" viewBox="0 0 20 20"><path d="M5 1 H15 L19 5 V19 H5 V12" fill="#fff" stroke="#b9b9b9" stroke-width="1.4"/><path d="M15 1 V5 H19" fill="#c9c9c9" stroke="#b9b9b9" stroke-width="1.2"/><path d="M5 0.5 L9.5 4.5 H7 V7.5 H3 V4.5 H0.5 Z" fill="#bdbdbd"/></svg>
<svg style="left:555px;top:54px" width="20" height="20" viewBox="0 0 20 20"><path d="M5 8 V1 H15 L19 5 V19 H9" fill="#fff" stroke="#b9b9b9" stroke-width="1.4"/><path d="M15 1 V5 H19" fill="#c9c9c9" stroke="#b9b9b9" stroke-width="1.2"/><path d="M5 18.5 L9.5 14.5 H7 V11.5 H3 V14.5 H0.5 Z" fill="#bdbdbd"/></svg>
<svg style="left:582px;top:54px" width="20" height="20" viewBox="0 0 20 20"><path d="M7 1 H15 L19 5 V19 H7" fill="#fff" stroke="#b9b9b9" stroke-width="1.4"/><path d="M15 1 V5 H19" fill="#c9c9c9" stroke="#b9b9b9" stroke-width="1.2"/><path d="M5 8 L9.5 4 H7 V1 H3 V4 H0.5 Z" fill="#bdbdbd"/><path d="M5 17 L9.5 13 H7 V10 H3 V13 H0.5 Z" fill="#bdbdbd"/></svg>
<svg style="left:621px;top:54px" width="20" height="20" viewBox="0 0 20 20"><rect x="0.8" y="0.8" width="18.4" height="18.4" rx="1" fill="#fff" stroke="#1a5f9a" stroke-width="1.5"/><rect x="1.5" y="1.5" width="17" height="4.5" fill="#8fb3d8"/><path d="M1 6.5 H19" stroke="#1a5f9a" stroke-width="1.2"/><circle cx="4.8" cy="14.8" r="4.2" fill="#f59b00"/><circle cx="4.8" cy="14.8" r="2.4" fill="#ffd000"/><rect x="0" y="11" width="10" height="9" fill="none"/></svg>
<svg style="left:648px;top:54px" width="20" height="20" viewBox="0 0 20 20"><rect x="0.8" y="0.8" width="18.4" height="18.4" rx="1" fill="#fff" stroke="#1a5f9a" stroke-width="1.5"/><rect x="1.5" y="1.5" width="17" height="4.5" fill="#8fb3d8"/><path d="M1 6.5 H19" stroke="#1a5f9a" stroke-width="1.2"/><path d="M6 16 Q6 10.5 11.5 10" fill="none" stroke="#333" stroke-width="2"/><path d="M10 8 L13.5 10 L10 12.5 Z" fill="#333"/></svg>
<svg style="left:687px;top:54px" width="20" height="20" viewBox="0 0 20 20"><circle cx="10" cy="10" r="9.2" fill="#8fb2d6" stroke="#1f5c94" stroke-width="1.4"/><text x="10" y="15.5" font-family="Liberation Sans" font-weight="bold" font-size="15" fill="#fff" text-anchor="middle">?</text></svg>
<svg style="left:714px;top:54px" width="20" height="20" viewBox="0 0 20 20"><rect x="0.8" y="0.8" width="18.4" height="13.4" rx="1" fill="#fff" stroke="#1a5f9a" stroke-width="1.5"/><rect x="2" y="2" width="5.5" height="9" fill="#cc0000"/><rect x="7.5" y="2" width="5" height="9" fill="#6fb030"/><rect x="12.5" y="2" width="5.5" height="9" fill="#0a7ac8"/><rect x="8.5" y="14" width="3" height="4" fill="#1a5f9a"/><rect x="5" y="18" width="10" height="2" fill="#1a5f9a"/></svg>
<svg style="left:29px;top:142px" width="21" height="20" viewBox="0 0 21 20"><path d="M5.5 0.7 H14.5 L19.5 5.5 V19.3 H5.5 Z" fill="#fff" stroke="#555" stroke-width="1.3"/><path d="M14.5 0.7 V6 H19.5 Z" fill="#666"/><path d="M12.5 5 H6.5 Q4.5 5 4 8" fill="none" stroke="#fff" stroke-width="4"/><path d="M12.5 5 H6.5 Q4.5 5 4 8" fill="none" stroke="#1f4c9c" stroke-width="2.2"/><path d="M-0.3 9 H7.5 L3.6 13.5 Z" fill="#1f4c9c"/><path d="M5 16.3 H11 Q13 16.3 13.5 13" fill="none" stroke="#1f4c9c" stroke-width="2.2"/><path d="M9.8 12 H17.3 L13.5 7.5 Z" fill="#1f4c9c"/></svg>
<svg style="left:450px;top:142px" width="21" height="20" viewBox="0 0 21 20"><circle cx="5.5" cy="5.8" r="4.6" fill="#7ab51d" stroke="#2f7a2f" stroke-width="1"/><circle cx="15.5" cy="13.8" r="4.6" fill="#e05a18" stroke="#b82a10" stroke-width="1"/><path d="M11 1.8 H14 L15.5 4" fill="none" stroke="#555" stroke-width="1.5"/><circle cx="15.5" cy="5.8" r="1.6" fill="#555"/><path d="M10 17.8 H7 L5.5 15.5" fill="none" stroke="#555" stroke-width="1.5"/><circle cx="5.5" cy="13.8" r="1.8" fill="#555"/></svg>
<svg style="left:602px;top:142px" width="20" height="20" viewBox="0 0 20 20"><path d="M6.5 3.5 V1.5 Q6.5 0.8 7.3 0.8 H12.7 Q13.5 0.8 13.5 1.5 V3.5" fill="#8fb3d8" stroke="#1a6a9a" stroke-width="1.4"/><path d="M1 5.5 Q1 3.5 3 3.5 H17 Q19 3.5 19 5.5" fill="#8fb3d8" stroke="#1a6a9a" stroke-width="1.6"/><path d="M1 8.5 Q1 6.5 3 6.5 H17 Q19 6.5 19 8.5" fill="none" stroke="#1a6a9a" stroke-width="1.5"/><path d="M3 7 V18.3 Q3 19.2 4 19.2 H16 Q17 19.2 17 18.3 V7" fill="#7aa6d0" stroke="#1a6a9a" stroke-width="1.5"/><rect x="5.5" y="8" width="1.6" height="10" fill="#fff"/><rect x="9.2" y="8" width="1.6" height="10" fill="#fff"/><rect x="12.9" y="8" width="1.6" height="10" fill="#fff"/></svg>
<svg style="left:757px;top:142px" width="20" height="19" viewBox="0 0 20 19"><path d="M5 1 H19 Q18 3 18.5 4 L17 4.5 Q16 5 17 7 Q18 9 16.5 13 H4 Q5.5 10 4 7 Q3 5 4 4 Z" fill="#fbc21a" stroke="#e2600a" stroke-width="1.3"/><path d="M0.8 15 H16.5 Q16 17.5 14.5 18 H1.5 Q0.5 17 0.8 15 Z" fill="#fbc21a" stroke="#e2600a" stroke-width="1.3"/></svg>
<svg style="left:870px;top:143px" width="18" height="18" viewBox="0 0 18 18"><rect width="18" height="18" fill="#cc0000"/><path d="M10.5 2.5 Q8.5 4.5 9.5 6 L6 7.5 M9.5 8 L12.5 8.5 L7 10 M6 12.5 H13.5 M6.5 12.5 Q7.5 15.5 10 15.5 L12.5 14.5" fill="none" stroke="#fff" stroke-width="1.7"/></svg>
<svg style="left:663px;top:242px" width="17" height="15" viewBox="0 0 17 15"><path d="M2 7 L5.5 12.5 L15 2" fill="none" stroke="#1f7a2a" stroke-width="4.6" stroke-linejoin="round" stroke-linecap="round"/><path d="M2 7 L5.5 12.5 L15 2" fill="none" stroke="#7dc02a" stroke-width="2.6" stroke-linejoin="round" stroke-linecap="round"/></svg>
<svg style="left:973px;top:242px" width="17" height="15" viewBox="0 0 17 15"><path d="M2 7 L5.5 12.5 L15 2" fill="none" stroke="#1f7a2a" stroke-width="4.6" stroke-linejoin="round" stroke-linecap="round"/><path d="M2 7 L5.5 12.5 L15 2" fill="none" stroke="#7dc02a" stroke-width="2.6" stroke-linejoin="round" stroke-linecap="round"/></svg>
<svg style="left:1303px;top:240px" width="24" height="22" viewBox="0 0 24 22"><rect x="1.5" y="1.5" width="11" height="13" fill="#fff" stroke="#444" stroke-width="1"/><rect x="2" y="2" width="10" height="2.5" fill="#ccc"/><rect x="2.5" y="8.5" width="2" height="2" fill="#c00"/><circle cx="11.5" cy="10" r="4.3" fill="#fff" stroke="#555" stroke-width="1.4"/><rect x="9.5" y="8.5" width="4" height="3" fill="#f00"/><path d="M14.5 13 L18.5 17" stroke="#444" stroke-width="2.4" stroke-linecap="round"/></svg>
<svg style="left:965px;top:349px" width="19" height="18" viewBox="0 0 19 18"><rect x="0" y="0" width="19" height="8" fill="#005a96"/><rect x="1" y="1" width="17" height="2" fill="#fff"/><rect x="1" y="4.5" width="2.5" height="3" fill="#a08878"/><rect x="15.5" y="4.5" width="2.5" height="3" fill="#a08878"/><rect x="4" y="4" width="11" height="14" fill="#005a96"/><rect x="5" y="4.5" width="9" height="12" fill="#fff"/><path d="M6 5 L9.5 8.5 L13 5 M9.5 8.5 V11 M6 15 L9.5 11 L13 15" fill="none" stroke="#005a96" stroke-width="0.8"/></svg>
<svg style="left:1424px;top:349px" width="20" height="18" viewBox="0 0 20 18"><path d="M1 0.8 H4.5 V6 H10 Q12.5 6 12.5 8.5 Q12.5 11 10 11 H4.5 V16.5 H1 Z" fill="#8fb3d8" stroke="#1a6a9a" stroke-width="1.4"/><path d="M7 3.5 V0.8 H18.5 V16.5 H7 V13.5 H10 Q14 13.5 14 8.5 Q14 3.5 10 3.5 Z" fill="#fcd22a" stroke="#e2600a" stroke-width="1.4"/><rect x="16.5" y="1" width="2" height="15.5" fill="#e2600a"/></svg>
<div class="a" style="left:147px;top:41px;width:224px;height:307px;background:#fff;border:1px solid #9a9a9a;box-shadow:inset 0 0 0 1px #fbfbfb,inset 0 0 0 2px #efefef,3px 3px 2px rgba(0,0,0,0.32)"></div>
<div class="a" style="left:150px;top:208px;width:217px;height:27px;background:#fadb85"></div>
<div class="t " style="left:180.20px;top:50.81px;font-size:14.4px;line-height:14.4px;color:#000;">L<u>i</u>cense management</div>
<div class="a" style="left:150px;top:71px;width:219px;height:1.2px;background:#c3cad3"></div>
<div class="t " style="left:180.20px;top:78.81px;font-size:14.4px;line-height:14.4px;color:#000;"><u>S</u>etup Global Config</div>
<div class="t " style="left:180.20px;top:105.81px;font-size:14.4px;line-height:14.4px;color:#000;">S<u>e</u>tup Group Def</div>
<div class="t " style="left:180.20px;top:132.81px;font-size:14.4px;line-height:14.4px;color:#000;">Se<u>t</u>up Task Group</div>
<div class="t " style="left:180.20px;top:159.81px;font-size:14.4px;line-height:14.4px;color:#000;"><u>A</u>pp Log Level</div>
<div class="a" style="left:150px;top:180px;width:219px;height:1.2px;background:#c3cad3"></div>
<div class="t " style="left:180.20px;top:187.81px;font-size:14.4px;line-height:14.4px;color:#000;">Setup <u>M</u>etric</div>
<svg style="left:353px;top:188.5px" width="7" height="11" viewBox="0 0 7 11"><path d="M0.5 0 L6.5 5.5 L0.5 11 Z" fill="#000"/></svg>
<div class="t " style="left:180.20px;top:214.81px;font-size:14.4px;line-height:14.4px;color:#000;">Met<u>r</u>ic filters</div>
<svg style="left:353px;top:215.5px" width="7" height="11" viewBox="0 0 7 11"><path d="M0.5 0 L6.5 5.5 L0.5 11 Z" fill="#000"/></svg>
<div class="t " style="left:180.20px;top:241.81px;font-size:14.4px;line-height:14.4px;color:#000;">Set<u>u</u>p Uploader</div>
<div class="t " style="left:180.20px;top:268.81px;font-size:14.4px;line-height:14.4px;color:#000;">Setup Up<u>l</u>oader Cfg</div>
<div class="t " style="left:180.20px;top:295.81px;font-size:14.4px;line-height:14.4px;color:#000;">S<u>p</u>lunk Setup</div>
<svg style="left:353px;top:296.5px" width="7" height="11" viewBox="0 0 7 11"><path d="M0.5 0 L6.5 5.5 L0.5 11 Z" fill="#000"/></svg>
<div class="a" style="left:150px;top:317px;width:219px;height:1.2px;background:#c3cad3"></div>
<div class="t " style="left:180.20px;top:324.31px;font-size:14.4px;line-height:14.4px;color:#000;"><u>C</u>heck Errors</div>
<div class="a" style="left:366px;top:205px;width:221px;height:411px;background:#fff;border:1px solid #9a9a9a;box-shadow:inset 0 0 0 1px #fbfbfb,inset 0 0 0 2px #efefef,3px 3px 2px rgba(0,0,0,0.32)"></div>
<div class="a" style="left:368px;top:586px;width:214px;height:27px;background:#fadb85"></div>
<div class="t " style="left:399.20px;top:214.81px;font-size:14.4px;line-height:14.4px;color:#000;"><u>E</u>CATT Configuration</div>
<div class="t " style="left:399.20px;top:241.81px;font-size:14.4px;line-height:14.4px;color:#000;"><u>I</u>DOC Segment filter</div>
<div class="t " style="left:399.20px;top:268.81px;font-size:14.4px;line-height:14.4px;color:#000;"><u>C</u>hange doc. filter</div>
<div class="t " style="left:399.20px;top:295.81px;font-size:14.4px;line-height:14.4px;color:#000;"><u>T</u>able reader filter</div>
<div class="t " style="left:399.20px;top:322.81px;font-size:14.4px;line-height:14.4px;color:#000;"><u>N</u>RIV filter</div>
<div class="t " style="left:399.20px;top:349.81px;font-size:14.4px;line-height:14.4px;color:#000;">SQ<u>V</u>I report filter</div>
<div class="t " style="left:399.20px;top:376.81px;font-size:14.4px;line-height:14.4px;color:#000;"><u>L</u>ogs file filter</div>
<div class="t " style="left:399.20px;top:403.81px;font-size:14.4px;line-height:14.4px;color:#000;">SM<u>3</u>7 job filter</div>
<div class="t " style="left:399.20px;top:430.81px;font-size:14.4px;line-height:14.4px;color:#000;">S<u>O</u>ST filter</div>
<div class="t " style="left:399.20px;top:457.81px;font-size:14.4px;line-height:14.4px;color:#000;"><u>A</u>L11 filter</div>
<div class="t " style="left:399.20px;top:484.81px;font-size:14.4px;line-height:14.4px;color:#000;"><u>S</u>LG1 filter</div>
<div class="t " style="left:399.20px;top:511.81px;font-size:14.4px;line-height:14.4px;color:#000;">S<u>R</u>T_MONI filter</div>
<div class="t " style="left:399.20px;top:538.81px;font-size:14.4px;line-height:14.4px;color:#000;">STA<u>D</u> metrics</div>
<svg style="left:568px;top:539.5px" width="7" height="11" viewBox="0 0 7 11"><path d="M0.5 0 L6.5 5.5 L0.5 11 Z" fill="#000"/></svg>
<div class="t " style="left:399.20px;top:565.81px;font-size:14.4px;line-height:14.4px;color:#000;">S<u>Q</u>L Scripts metrics</div>
<svg style="left:568px;top:566.5px" width="7" height="11" viewBox="0 0 7 11"><path d="M0.5 0 L6.5 5.5 L0.5 11 Z" fill="#000"/></svg>
<div class="t " style="left:399.20px;top:592.81px;font-size:14.4px;line-height:14.4px;color:#000;"><u>M</u>ore</div>
<svg style="left:568px;top:593.5px" width="7" height="11" viewBox="0 0 7 11"><path d="M0.5 0 L6.5 5.5 L0.5 11 Z" fill="#000"/></svg>
<div class="a" style="left:581px;top:583px;width:219px;height:274px;background:#fff;border:1px solid #9a9a9a;box-shadow:inset 0 0 0 1px #fbfbfb,inset 0 0 0 2px #efefef,3px 3px 2px rgba(0,0,0,0.32)"></div>
<div class="a" style="left:583px;top:586px;width:214px;height:27px;background:#fadb85"></div>
<div class="t " style="left:614.30px;top:592.81px;font-size:14.4px;line-height:14.4px;color:#000;">S<u>X</u>MB filter</div>
<div class="t " style="left:614.30px;top:619.81px;font-size:14.4px;line-height:14.4px;color:#000;"><u>P</u>rocess Chain filter</div>
<div class="t " style="left:614.30px;top:646.81px;font-size:14.4px;line-height:14.4px;color:#000;"><u>S</u>M20 Audit Log filter</div>
<div class="t " style="left:614.30px;top:673.81px;font-size:14.4px;line-height:14.4px;color:#000;"><u>R</u>ecord count filter</div>
<div class="t " style="left:614.30px;top:700.81px;font-size:14.4px;line-height:14.4px;color:#000;">R<u>o</u>le authorizations</div>
<div class="t " style="left:614.30px;top:727.81px;font-size:14.4px;line-height:14.4px;color:#000;">S<u>M</u>21 Sys.Log filter</div>
<div class="t " style="left:614.30px;top:754.81px;font-size:14.4px;line-height:14.4px;color:#000;"><u>B</u>DOC filter</div>
<div class="t " style="left:614.30px;top:781.81px;font-size:14.4px;line-height:14.4px;color:#000;">S<u>C</u>U3 table filter</div>
<div class="t " style="left:614.30px;top:808.81px;font-size:14.4px;line-height:14.4px;color:#000;"><u>L</u>TRC table filter</div>
<div class="t " style="left:614.30px;top:835.81px;font-size:14.4px;line-height:14.4px;color:#000;">SM<u>5</u>9 dest. filter</div></body></html>
